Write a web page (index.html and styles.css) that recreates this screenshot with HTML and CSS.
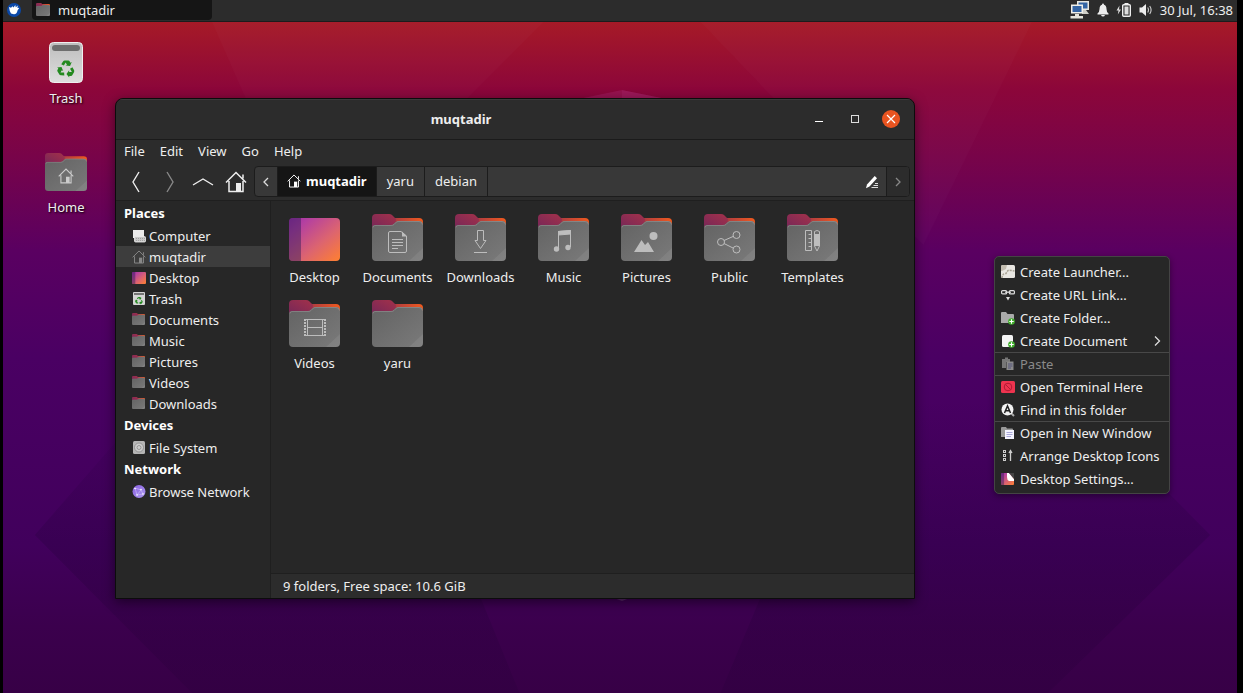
FILE: index.html
```html
<!DOCTYPE html>
<html lang="en">
<head>
<meta charset="utf-8">
<title>muqtadir</title>
<link rel="stylesheet" href="styles.css">
</head>
<body>
<svg class="defs" width="0" height="0" aria-hidden="true">
  <defs>
    <linearGradient id="g-back" x1="0" y1="0" x2="1" y2="0"><stop offset="0" stop-color="#772953"/><stop offset=".4" stop-color="#b8403c"/><stop offset="1" stop-color="#f05a1e"/></linearGradient>
    <linearGradient id="g-tab" x1="0" y1="1" x2="1" y2="0"><stop offset="0" stop-color="#762758"/><stop offset="1" stop-color="#a3314a"/></linearGradient>
    <linearGradient id="g-front" x1="0" y1="0" x2="1" y2="1"><stop offset="0" stop-color="#636363"/><stop offset="1" stop-color="#7a7a7a"/></linearGradient>
    <linearGradient id="g-desk" x1="0" y1="0" x2="1" y2="1"><stop offset="0" stop-color="#9c2fa8"/><stop offset=".2" stop-color="#b440a0"/><stop offset=".6" stop-color="#dc6470"/><stop offset="1" stop-color="#ff8030"/></linearGradient>
    <linearGradient id="g-trash" x1="0" y1="0" x2="0" y2="1"><stop offset="0" stop-color="#bdbdbd"/><stop offset="1" stop-color="#dedede"/></linearGradient>
    <linearGradient id="g-net" x1="0" y1="0" x2="1" y2="1"><stop offset="0" stop-color="#8a5fe0"/><stop offset="1" stop-color="#ab98f0"/></linearGradient>
  </defs>
  <symbol id="folder" viewBox="0 0 51 47" preserveAspectRatio="none">
    <path d="M10 4H47Q51 4 51 8V20H10Z" fill="url(#g-back)"/>
    <path d="M0 14V4Q0 0 4 0H17Q19 0 20 1L24 5L23 14Z" fill="url(#g-tab)"/>
    <path d="M0 43V14Q0 11 3 11H19Q20.500 11 21.500 10L23 8.500Q24.500 7 26 7H47Q51 7 51 11V43Q51 47 47 47H4Q0 47 0 43Z" fill="url(#g-front)"/>
    <path d="M37 47L51 34V43Q51 47 47 47Z" fill="#fff" opacity=".07"/>
    <path d="M1 13.500Q1 11.500 3 11.500H19Q21 11.500 22 10.500L23.500 9Q24.500 7.500 26 7.500H47Q50 7.500 50.500 10.500" fill="none" stroke="#fff" opacity=".22" stroke-width=".8"/>
  </symbol>
  <symbol id="desk" viewBox="0 0 51 44" preserveAspectRatio="none">
    <rect width="51" height="44" rx="4" fill="url(#g-desk)"/>
    <path d="M4 0H12V44H4Q0 44 0 40V4Q0 0 4 0Z" fill="#2c1a55" opacity=".45"/>
  </symbol>
  <symbol id="recycle" viewBox="0 0 20 20">
    <g fill="#23891f">
      <path d="M6.700 2.200Q7.300 1 8.700 1H12.600Q13.500 1 14 2L14.900 3.500L16.400 2.700L14.500 7.300L9.600 6.700L11.100 5.800L9.600 3.200L7.600 6.700L4.700 5.300Z"/>
      <path d="M6.700 2.200Q7.300 1 8.700 1H12.600Q13.500 1 14 2L14.900 3.500L16.400 2.700L14.500 7.300L9.600 6.700L11.100 5.800L9.600 3.200L7.600 6.700L4.700 5.300Z" transform="rotate(120 10 10.500)"/>
      <path d="M6.700 2.200Q7.300 1 8.700 1H12.600Q13.500 1 14 2L14.900 3.500L16.400 2.700L14.500 7.300L9.600 6.700L11.100 5.800L9.600 3.200L7.600 6.700L4.700 5.300Z" transform="rotate(240 10 10.500)"/>
    </g>
  </symbol>
  <symbol id="trash" viewBox="0 0 34 41" preserveAspectRatio="none">
    <rect x=".5" y=".5" width="33" height="40" rx="4" fill="url(#g-trash)" stroke="#efefef"/>
    <rect x="3" y="3" width="28" height="6" rx="3" fill="#6e6e6e"/>
    <use href="#recycle" x="8" y="17" width="18" height="19"/>
  </symbol>
  <symbol id="house" viewBox="0 0 22 22">
    <path d="M1 11.500L11 1.500L21 11.500M4 10V20.500H18V10M18 7.500V3.500" fill="none" stroke="currentColor" stroke-width="1.500"/>
    <rect x="11" y="12" width="5" height="8.500" fill="currentColor"/>
  </symbol>
  <symbol id="plus" viewBox="0 0 8 8">
    <circle cx="4" cy="4" r="3.800" fill="#3fae2a"/><path d="M4 1.500V6.500M1.500 4H6.500" stroke="#fff" stroke-width="1.300"/>
  </symbol>
</svg>

<div class="screen">
  <header class="panel">
    <button class="panel-menu" aria-label="Applications">
      <svg width="14" height="14" viewBox="0 0 14 14"><circle cx="7" cy="7" r="7" fill="#0a48a8"/><path d="M2 4L4 4.800L5.500 3.200L6.500 4.600L8.300 2L8.700 4.200L11 2.600L10.300 4.800L12.200 5L10.500 7.500Q10 11 7 11.300L4 10.500Q2.500 8.500 2 4Z" fill="#fff"/></svg>
    </button>
    <button class="task"><svg width="14" height="13"><use href="#folder" width="14" height="13"/></svg>muqtadir</button>
    <div class="tray">
      <svg width="20" height="20" viewBox="0 0 20 20"><rect x="7" y="1" width="12" height="9" fill="#e8e8e0"/><rect x="8.500" y="2.500" width="9" height="6" fill="#3465a4"/><path d="M13 10H16L19 14H12Z" fill="#cfcfc8"/><rect x="1" y="4.500" width="12" height="9" fill="#f0f0ea"/><rect x="2.500" y="6" width="9" height="6" fill="#3465a4"/><path d="M5 14H9V16H13V18.500H0.500V16H5Z" fill="#e4e4dc"/></svg>
      <svg width="12" height="14" viewBox="0 0 12 14"><path d="M6 0.500Q7 .5 7 1.700Q9.500 2.500 9.500 6Q9.500 9 11.500 10.500V11.500H.5V10.500Q2.500 9 2.500 6Q2.500 2.500 5 1.700Q5 .5 6 .5Z" fill="#eee"/><path d="M4 12H8Q7.500 13.500 6 13.500Q4.500 13.500 4 12Z" fill="#eee"/></svg>
      <svg width="16" height="14" viewBox="0 0 16 14"><path d="M3.500 2.500L.5 7.500H2.500L1.800 11.500L5 6.500H3Z" fill="#ddd"/><rect x="6.700" y="1.700" width="7.600" height="11.600" rx="1" fill="none" stroke="#eee" stroke-width="1.400"/><rect x="8.500" y="3.500" width="4" height="8" fill="#ddd"/><path d="M8.500 .6H12.500" stroke="#eee" stroke-width="1.400"/></svg>
      <svg width="14" height="14" viewBox="0 0 14 14"><path d="M.5 4.500H3L7 1V13L3 9.500H.5Z" fill="#eee"/><path d="M8.700 4.500Q10.300 7 8.700 9.500M10.700 3Q13.500 7 10.700 11" fill="none" stroke="#ccc" stroke-width="1.100"/></svg>
      <time class="clock">30 Jul, 16:38</time>
    </div>
  </header>

  <main class="desktop">
    <svg class="wallpaper" viewBox="0 22 1240 671" preserveAspectRatio="none" aria-hidden="true">
      <defs>
        <linearGradient id="g-sky" x1="0" y1="0" x2="0" y2="1">
          <stop offset="0" stop-color="#a61a27"/><stop offset=".1" stop-color="#8c063a"/><stop offset=".2" stop-color="#780449"/><stop offset=".34" stop-color="#5a0061"/><stop offset=".5" stop-color="#4a0063"/><stop offset=".78" stop-color="#41005c"/><stop offset=".9" stop-color="#3b004d"/><stop offset="1" stop-color="#370046"/>
        </linearGradient>
        <linearGradient id="g-shade" x1="0" y1="0" x2="0" y2="1">
          <stop offset="0" stop-color="#18002e" stop-opacity="0"/><stop offset=".5" stop-color="#18002e" stop-opacity=".2"/><stop offset="1" stop-color="#18002e" stop-opacity=".12"/>
        </linearGradient>
      </defs>
      <rect y="22" width="1240" height="671" fill="url(#g-sky)"/>
      <path d="M210 22L320 270L468 97L543 22Z" fill="#fff" opacity=".02"/>
      <path d="M701 22L773 97L925 245L1034 22Z" fill="#fff" opacity=".02"/>
      <path d="M583 98L622 90L662 98L662 120H583Z" fill="#ff80ff" opacity=".1"/>
      <path d="M622 90L662 98V120H622Z" fill="#ff80ff" opacity=".06"/>
      <path d="M32 535L190 693H519L480 598L300 400H150Z" fill="url(#g-shade)"/>
      <path d="M1213 535L1050 693H721L761 598L900 400H1079Z" fill="url(#g-shade)"/>
      <path d="M614 598H630L622 601Z" fill="#bbb" opacity=".2"/>
    </svg>

    <div class="launchers">
      <a class="launcher" href="#trash-can"><svg width="42" height="43"><use href="#trash" x="4" y="1" width="34" height="41"/></svg><span>Trash</span></a>
      <a class="launcher" href="#home"><svg width="42" height="43"><use href="#folder" y="3" width="42" height="38"/><use class="glyph" href="#house" x="13" y="18" width="16" height="16"/></svg><span>Home</span></a>
    </div>

    <section class="window" aria-label="muqtadir">
      <div class="titlebar">
        <h1 class="title">muqtadir</h1>
        <button class="winbtn" aria-label="Minimize"><svg width="18" height="18"><path d="M5 11.500H13" stroke="#fff"/></svg></button>
        <button class="winbtn" aria-label="Maximize"><svg width="18" height="18"><rect x="5.500" y="5.500" width="7" height="7" fill="none" stroke="#ddd"/></svg></button>
        <button class="winbtn" aria-label="Close"><svg width="18" height="18"><circle cx="9" cy="9" r="9" fill="#e95420"/><path d="M5 5L13 13M13 5L5 13" stroke="#fff" stroke-width="1.200"/></svg></button>
      </div>
      <nav class="menubar">
        <button>File</button><button>Edit</button><button>View</button><button>Go</button><button>Help</button>
      </nav>
      <div class="toolbar">
        <button class="tool" aria-label="Back"><svg width="22" height="22"><path d="M13 1L7 11L13 21" fill="none" stroke="#eee" stroke-width="1.400"/></svg></button>
        <button class="tool" aria-label="Forward" disabled><svg width="22" height="22"><path d="M8 1L14 11L8 21" fill="none" stroke="#888" stroke-width="1.400"/></svg></button>
        <button class="tool" aria-label="Up"><svg width="22" height="22"><path d="M1 14L11 8L21 14" fill="none" stroke="#eee" stroke-width="1.400"/></svg></button>
        <button class="tool" aria-label="Home"><svg width="22" height="22"><use href="#house" width="22" height="22"/></svg></button>
        <div class="pathbar">
          <button class="crumb step" aria-label="Scroll left"><svg width="8" height="10"><path d="M6 1L2 5L6 9" fill="none" stroke="#ddd" stroke-width="1.300"/></svg></button>
          <button class="crumb current"><svg width="14" height="14"><use href="#house" width="14" height="14"/></svg>muqtadir</button>
          <button class="crumb">yaru</button>
          <button class="crumb">debian</button>
          <button class="crumb edit" aria-label="Edit path"><svg width="14" height="14" viewBox="0 0 14 14"><path d="M9.700 1L12 3.300L4.500 11.500L1 13.200L2 9.500Z" fill="#fff"/><path d="M10 8.500H13M8.500 10.500H13M6.500 12.500H13" stroke="#ddd"/></svg></button>
          <button class="crumb step last" aria-label="Scroll right" disabled><svg width="8" height="10"><path d="M2 1L6 5L2 9" fill="none" stroke="#888" stroke-width="1.300"/></svg></button>
        </div>
      </div>

      <div class="body">
        <aside class="sidebar">
          <h2>Places</h2>
          <a href="#computer"><svg width="14" height="14" viewBox="0 0 14 14"><rect x="1" y="1" width="11" height="8" fill="#eaeaea"/><rect x="2.500" y="7.500" width="11" height="5.500" rx="1" fill="#c8c8c8" stroke="#eee" stroke-width=".8"/><path d="M4 9.500H13M4 11.500H13" stroke="#888" stroke-width=".6" stroke-dasharray="1 1"/></svg>Computer</a>
          <a href="#muqtadir" class="selected"><svg class="dim" width="14" height="14"><use href="#house" width="14" height="14"/></svg>muqtadir</a>
          <a href="#desktop"><svg width="14" height="14"><use href="#desk" x="0" y="1" width="14" height="12"/></svg>Desktop</a>
          <a href="#trash-can"><svg width="14" height="14"><rect x="1" width="12" height="13" rx="1" fill="#d4d4d4"/><path d="M2 2H12" stroke="#555" stroke-width="1.500"/><use href="#recycle" x="3" y="4" width="8" height="9"/></svg>Trash</a>
          <a href="#documents"><svg width="14" height="14"><use href="#folder" y="0" width="13" height="12"/></svg>Documents</a>
          <a href="#music"><svg width="14" height="14"><use href="#folder" y="0" width="13" height="12"/></svg>Music</a>
          <a href="#pictures"><svg width="14" height="14"><use href="#folder" y="0" width="13" height="12"/></svg>Pictures</a>
          <a href="#videos"><svg width="14" height="14"><use href="#folder" y="0" width="13" height="12"/></svg>Videos</a>
          <a href="#downloads"><svg width="14" height="14"><use href="#folder" y="0" width="13" height="12"/></svg>Downloads</a>
          <h2>Devices</h2>
          <a href="#file-system"><svg width="14" height="14"><rect x="1" width="12" height="13" rx="1.500" fill="#b5b5b5"/><circle cx="7" cy="6.500" r="4.500" fill="#ccc" stroke="#888" stroke-width=".8"/><circle cx="7" cy="6.500" r="2" fill="none" stroke="#888" stroke-width=".8"/></svg>File System</a>
          <h2>Network</h2>
          <a href="#network"><svg width="14" height="14"><circle cx="7" cy="6.500" r="6.500" fill="url(#g-net)"/><path d="M3 3L9 5L11 9L5 10L3 3M9 5L5 10" fill="none" stroke="#d9d0ff" stroke-width=".5"/><g fill="#fff"><circle cx="3" cy="3.500" r=".8"/><circle cx="9" cy="4.500" r=".8"/><circle cx="11" cy="9" r=".8"/><circle cx="5" cy="10" r=".8"/></g></svg>Browse Network</a>
        </aside>

        <div class="content">
          <div class="files">
            <a class="file" href="#desktop"><svg width="51" height="48"><use href="#desk" y="4" width="51" height="43"/></svg><span>Desktop</span></a>
            <a class="file" href="#documents"><svg width="51" height="48"><use href="#folder" width="51" height="47"/><g class="mark"><path d="M18 17.500H29L34.500 22V37Q34.500 38.500 33 38.500H18Q16.500 38.500 16.500 37V19Q16.500 17.500 18 17.500ZM20 25.500H31M20 28.500H31M20 31.500H31M20 34.500H26"/><path class="solid" d="M30 17.500L35 22.500H30Z"/></g></svg><span>Documents</span></a>
            <a class="file" href="#downloads"><svg width="51" height="48"><use href="#folder" width="51" height="47"/><path class="mark" d="M22.500 16.500H28.500V26.500H31L25.500 34.500L20 26.500H22.500ZM19 38.500H32"/></svg><span>Downloads</span></a>
            <a class="file" href="#music"><svg width="51" height="48"><use href="#folder" width="51" height="47"/><g class="mark"><path d="M20.500 35V17.500L32.500 16.500V33M20.500 21L32.500 20"/><path class="solid" d="M20 17L33 16V20L20 21Z"/><circle class="solid" cx="18.500" cy="35" r="2.700"/><circle class="solid" cx="30" cy="33.500" r="2.700"/></g></svg><span>Music</span></a>
            <a class="file" href="#pictures"><svg width="51" height="48"><use href="#folder" width="51" height="47"/><path class="solid" d="M13 38L20.500 26L24 31L27 28L33 38Z"/><circle class="solid" cx="32.500" cy="22" r="4"/></svg><span>Pictures</span></a>
            <a class="file" href="#public"><svg width="51" height="48"><use href="#folder" width="51" height="47"/><g class="mark"><circle cx="17" cy="28" r="3.500"/><circle cx="32.500" cy="21" r="3.500"/><circle cx="32.500" cy="35.500" r="3.500"/><path d="M20 26.500L29 22.500M20 29.500L29 34"/></g></svg><span>Public</span></a>
            <a class="file" href="#templates"><svg width="51" height="48"><use href="#folder" width="51" height="47"/><g class="mark"><path d="M18.500 16.500H24.500V36.500H18.500ZM21.500 20.500H24.500M21.500 24.500H24.500M21.500 28.500H24.500M21.500 32.500H24.500M27.500 17.500Q30 15.500 32.500 17.500V32L30 37L27.500 32Z"/><rect class="solid" x="28" y="20" width="4" height="12"/></g></svg><span>Templates</span></a>
            <a class="file" href="#videos"><svg width="51" height="48"><use href="#folder" width="51" height="47"/><g class="mark"><path d="M15 19.500H36M18 27.500H33M15 35.500H36M18.500 19V36M33.500 19V36"/><path d="M16 19V36.500M36 19V36.500" stroke-width="2" stroke-dasharray="2 1"/></g></svg><span>Videos</span></a>
            <a class="file" href="#yaru"><svg width="51" height="48"><use href="#folder" width="51" height="47"/></svg><span>yaru</span></a>
          </div>
          <footer class="status">9 folders, Free space: 10.6 GiB</footer>
        </div>
      </div>
    </section>

    <div class="context" role="menu">
      <button role="menuitem"><svg width="14" height="14"><rect width="14" height="13" rx="1.500" fill="#e9e7e2"/><path d="M1 13Q1 8.500 5 8.500L6 7Q7 4.500 10 5.500L13.500 6" fill="none" stroke="#a9a394" stroke-width="1.500" stroke-dasharray="2 1"/><path d="M0 1.500Q0 0 1.500 0H6L5 4L1 6H0Z" fill="#c3bdb0"/></svg>Create Launcher...</button>
      <button role="menuitem"><svg width="14" height="14"><g fill="none" stroke="#ddd" stroke-width="1.200"><rect x=".6" y="2.600" width="5" height="3.300" rx="1"/><rect x="8.400" y="2.600" width="5" height="3.300" rx="1"/><path d="M4 4.200H10"/></g><path d="M5 9H9L7 12.500Z" fill="#ddd"/></svg>Create URL Link...</button>
      <button role="menuitem"><svg width="14" height="14"><path d="M0 2Q0 1 1 1H5L6.500 3H12Q13 3 13 4V12H0Z" fill="#aaa"/><use href="#plus" x="7" y="7" width="7" height="7"/></svg>Create Folder...</button>
      <button role="menuitem" class="parent"><svg width="14" height="14"><rect x="1" y="1" width="11" height="12" rx="1.500" fill="#f4f4f4"/><use href="#plus" x="7" y="7" width="7" height="7"/></svg>Create Document<svg class="arrow" width="8" height="12"><path d="M2 1.500L6.500 6L2 10.500" fill="none" stroke="#ddd" stroke-width="1.300"/></svg></button>
      <button role="menuitem" class="split" disabled><svg width="14" height="14"><path d="M1 2H4V.5H7V2H9V5H5V11H1Z" fill="#777"/><rect x="5.500" y="4.500" width="7" height="8.500" fill="#8a8a8a"/><path d="M7 7H11.500M7 9H11.500M7 11H10" stroke="#54547a"/></svg>Paste</button>
      <button role="menuitem" class="split"><svg width="14" height="14"><rect y="1" width="14" height="12" rx="1.500" fill="#ee344f"/><circle cx="7" cy="7" r="3.800" fill="none" stroke="#b01a34"/><path d="M4.500 4.500L9.500 9.500" stroke="#b01a34"/></svg>Open Terminal Here</button>
      <button role="menuitem"><svg width="14" height="14"><path d="M9.500 9.500L13 13" stroke="#aaa" stroke-width="2"/><circle cx="6.500" cy="6.500" r="6" fill="#f2f2f2"/><path d="M3.500 10L6.500 3L9.500 10M4.500 7.800H8.500" fill="none" stroke="#222" stroke-width="1.500"/></svg>Find in this folder</button>
      <button role="menuitem" class="split"><svg width="14" height="14"><path d="M0 2Q0 1 1 1H5L6 2.500H11Q12 2.500 12 3.500V11H0Z" fill="#999"/><rect x="4" y="4" width="9" height="9" fill="#f4f4ff"/><path d="M5.500 6.500H11.500M5.500 8.500H11.500M5.500 10.500H10" stroke="#a9a7da"/></svg>Open in New Window</button>
      <button role="menuitem"><svg width="14" height="14"><g fill="none" stroke="#ccc"><rect x="2.500" y="1.500" width="2" height="2"/><rect x="2.500" y="5.500" width="2" height="2"/><rect x="2.500" y="9.500" width="2" height="2"/><path d="M9.500 12V2M8 4L9.500 1.500L11 4" stroke-width="1.300"/></g></svg>Arrange Desktop Icons</button>
      <button role="menuitem"><svg width="14" height="14"><use href="#desk" y="1" width="13" height="12"/><path d="M6 1H8L13 7V9H8Q6 8 6 5Z" fill="#fff"/><path d="M8 1H13V7Z" fill="#444"/></svg>Desktop Settings...</button>
    </div>
  </main>
</div>
</body>
</html>
```

FILE: styles.css
```css
* { box-sizing: border-box; }

body {
  margin: 0;
  background: #000;
  color: #eee;
  font: 13px/20px "Noto Sans", "Open Sans", sans-serif;
}

button {
  margin: 0;
  padding: 0;
  border: 0;
  background: none;
  color: inherit;
  font: inherit;
}

a { color: inherit; text-decoration: none; }
svg { display: block; flex: none; }
h1, h2 { margin: 0; font-size: 13px; font-weight: 700; }
.defs { position: absolute; }

.screen {
  display: flex;
  flex-direction: column;
  min-height: 100vh;
  padding: 0 6px 0 3px;
}

/* Top panel */
.panel {
  display: flex;
  align-items: center;
  height: 22px;
  padding: 0 4px 2px;
  border-bottom: 1px solid #1c1c1c;
  background: #2c2c2c;
}
.panel-menu { padding: 0 11px 0 0; }
.task {
  display: flex;
  align-items: center;
  gap: 8px;
  width: 180px;
  height: 20px;
  padding: 0 4px;
  border-radius: 0 0 4px 4px;
  background: #151515;
}
.tray {
  display: flex;
  align-items: center;
  gap: 7px;
  margin-left: auto;
}

/* Desktop */
.desktop { position: relative; flex: 1; overflow: hidden; }
.wallpaper { position: absolute; inset: 0; width: 100%; height: 100%; }

.launchers {
  position: relative;
  display: flex;
  flex-direction: column;
  gap: 42px;
  width: 126px;
  padding-top: 19px;
}
.launcher {
  display: flex;
  flex-direction: column;
  align-items: center;
  gap: 4px;
  text-shadow: 1px 1px 2px #000;
}
.launcher .glyph { color: #ccc; }

/* File manager window */
.window {
  position: absolute;
  inset: 76px 322px 94px 112px;
  display: flex;
  flex-direction: column;
  overflow: hidden;
  border: 1px solid #0c0c0c;
  border-radius: 8px 8px 0 0;
  background: #2c2c2c;
  box-shadow: 0 3px 12px rgba(0, 0, 0, .5);
}
.titlebar {
  display: flex;
  align-items: center;
  height: 41px;
  padding: 0 5px 2px;
  border-top: 1px solid #3a3a3a;
  border-bottom: 1px solid #1b1b1b;
}
.title { flex: 1; text-align: center; }
.winbtn { display: grid; place-items: center; width: 36px; height: 36px; }

.menubar { display: flex; gap: 15px; padding: 1px 8px 3px; }

.toolbar {
  display: flex;
  align-items: center;
  padding: 2px 4px 3px;
  border-bottom: 1px solid #1f1f1f;
}
.tool { display: grid; place-items: center; width: 33px; height: 30px; }
.tool + .pathbar { margin-left: 2px; }
.pathbar {
  display: flex;
  flex: 1;
  height: 31px;
  overflow: hidden;
  border: 1px solid #1c1c1c;
  border-radius: 4px;
  background: #383838;
}
.crumb {
  display: flex;
  align-items: center;
  gap: 5px;
  padding: 0 10px 2px;
  border-right: 1px solid #1c1c1c;
}
.crumb.step { padding: 0 7px; }
.crumb.current { padding: 0 9px 2px; background: #151515; color: #fff; font-weight: 700; }
.crumb.edit { flex: 1; justify-content: flex-end; padding: 0 7px; }
.crumb.last { border-right: 0; background: #2c2c2c; }

.body { display: flex; flex: 1; min-height: 0; background: #272727; }

.sidebar { width: 155px; padding-top: 1px; border-right: 1px solid #1f1f1f; }
.sidebar h2 { padding: 0 8px; color: #fff; line-height: 23px; }
.sidebar a {
  display: flex;
  align-items: center;
  gap: 3px;
  height: 21px;
  padding-left: 16px;
}
.sidebar .selected { background: #3d3d3d; }
.sidebar .dim { color: #888; }

.content { display: flex; flex: 1; flex-direction: column; }
.files {
  display: grid;
  flex: 1;
  grid-template-columns: repeat(auto-fill, 83px);
  align-content: start;
  row-gap: 13px;
  padding: 13px 2px 0;
}
.file {
  display: flex;
  flex-direction: column;
  align-items: center;
  gap: 5px;
}
.mark { fill: none; stroke: #bdbdbd; stroke-width: 1; }
.solid { fill: #bdbdbd; stroke: none; }

.status {
  padding: 2px 12px;
  border-top: 1px solid #1f1f1f;
  background: #2c2c2c;
}

/* Desktop context menu */
.context {
  position: absolute;
  top: 234px;
  right: 67px;
  display: flex;
  flex-direction: column;
  min-width: 176px;
  padding: 3px 0;
  border: 1px solid #444;
  border-radius: 5px;
  background: #272727;
  box-shadow: 0 2px 6px rgba(0, 0, 0, .4);
}
.context button {
  display: flex;
  align-items: center;
  gap: 5px;
  height: 23px;
  padding: 0 8px 0 6px;
  text-align: left;
}
.context .split { border-top: 1px solid #484848; }
.context button:disabled { color: #8a8a8a; }
.context .arrow { margin-left: auto; }
```
